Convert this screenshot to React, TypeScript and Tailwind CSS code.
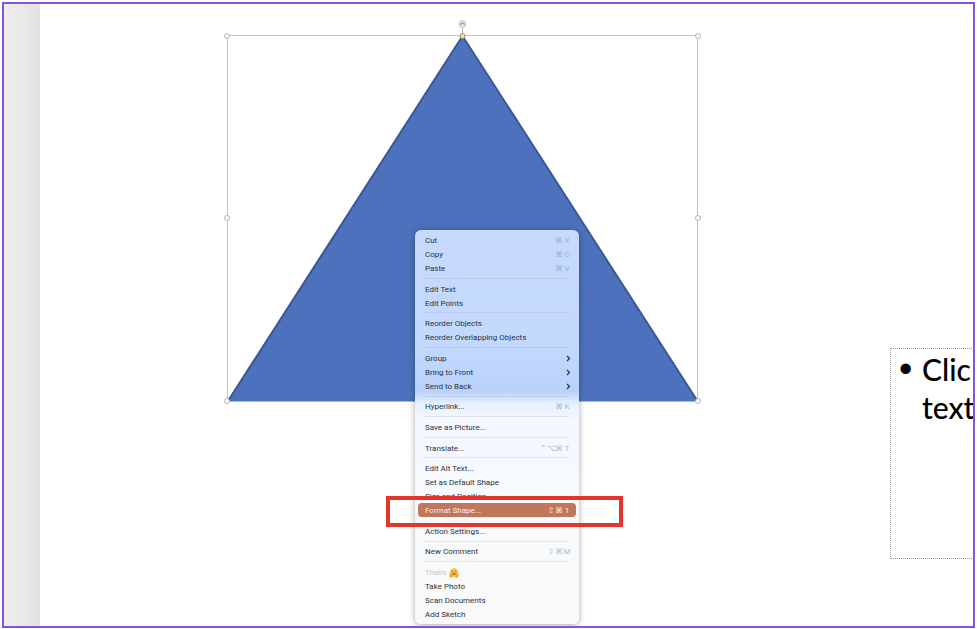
import React from 'react';

interface MenuItem {
  label: string;
  shortcut?: string[];
  submenu?: boolean;
  active?: boolean;
  disabled?: boolean;
}

const MENU: MenuItem[][] = [
  [
    { label: 'Cut', shortcut: ['⌘', 'X'] },
    { label: 'Copy', shortcut: ['⌘', 'C'] },
    { label: 'Paste', shortcut: ['⌘', 'V'] },
  ],
  [{ label: 'Edit Text' }, { label: 'Edit Points' }],
  [{ label: 'Reorder Objects' }, { label: 'Reorder Overlapping Objects' }],
  [
    { label: 'Group', submenu: true },
    { label: 'Bring to Front', submenu: true },
    { label: 'Send to Back', submenu: true },
  ],
  [{ label: 'Hyperlink...', shortcut: ['⌘', 'K'] }],
  [{ label: 'Save as Picture...' }],
  [{ label: 'Translate...', shortcut: ['⌃', '⌥', '⌘', 'T'] }],
  [
    { label: 'Edit Alt Text...' },
    { label: 'Set as Default Shape' },
    { label: 'Size and Position' },
    { label: 'Format Shape...', shortcut: ['⇧', '⌘', '1'], active: true },
  ],
  [{ label: 'Action Settings...' }],
  [{ label: 'New Comment', shortcut: ['⇧', '⌘', 'M'] }],
  [
    { label: 'Thaiis', disabled: true },
    { label: 'Take Photo' },
    { label: 'Scan Documents' },
    { label: 'Add Sketch' },
  ],
];

const HugFace: React.FC = () => (
  <svg viewBox="0 0 20 20" className="ml-0.5 size-[10px]" aria-hidden="true">
    <circle cx="10" cy="9" r="8.5" fill="#f7bd45" />
    <path d="M5.5 7.5q1.5-2 3 0M11.5 7.5q1.5-2 3 0" stroke="#7a4a12" strokeWidth="1.3" fill="none" />
    <path d="M6 10.5h8q-1 3-4 3t-4-3z" fill="#9a5a22" />
    <path d="M1 12q4-1 6 3t-2 4.5Q0 19 1 12zM19 12q-4-1-6 3t2 4.5Q20 19 19 12z" fill="#eda338" />
  </svg>
);

const Chevron: React.FC = () => (
  <svg viewBox="0 0 6 8" className="h-2 w-1.5" aria-hidden="true">
    <path d="M2 1L4.5 3.5L2 6" fill="none" stroke="#243a63" strokeWidth="1.3" />
  </svg>
);

const MenuRow: React.FC<{ item: MenuItem }> = ({ item }) => {
  const tone = item.active
    ? 'bg-[#bf785b] text-[#fdeee6]'
    : item.disabled
      ? 'text-[#c6c6ca]'
      : 'text-[#2a3344]';
  const keyTone = item.active ? 'text-[#fdeee6]' : 'text-[#8d9bb5]/70';

  return (
    <button
      type="button"
      role="menuitem"
      disabled={item.disabled}
      className={`flex h-[14px] shrink-0 items-center rounded-[4px] pt-0.5 pr-[5px] pl-[7px] text-left text-[8px] leading-[14px] whitespace-nowrap ${tone}`}
    >
      <span>{item.label}</span>
      {item.disabled && <HugFace />}
      {item.shortcut && (
        <span className={`ml-auto flex ${keyTone}`}>
          {item.shortcut.map((key) => (
            <span key={key} className="w-2 text-center">{key}</span>
          ))}
        </span>
      )}
      {item.submenu && <span className="ml-auto"><Chevron /></span>}
    </button>
  );
};

const ContextMenu: React.FC = () => (
  <div
    role="menu"
    className="absolute top-[226px] left-[375px] flex h-[394px] w-[164px] flex-col rounded-[6px] bg-[linear-gradient(to_bottom,#c6dafc_0%,#c2d8fd_30%,#b9d1fb_41%,#e6f0fe_44%,#f3f8ff_48%,#f6f9fe_65%,#f9f9f9_85%)] p-[3px] font-['Roboto','DejaVu_Sans',sans-serif] shadow-[0_1px_6px_rgba(0,0,0,0.35)]"
  >
    {MENU.map((group, i) => (
      <React.Fragment key={group[0].label}>
        {i > 0 && (
          <div role="separator" className="mx-[7px] flex flex-1 items-center">
            {!MENU[i - 1].some((item) => item.active) && (
              <div className="h-px w-full bg-[#7d93bb]/20" />
            )}
          </div>
        )}
        {group.map((item) => (
          <MenuRow key={item.label} item={item} />
        ))}
      </React.Fragment>
    ))}
  </div>
);

const HANDLES = [
  [5, 18], [476, 18], [5, 200], [476, 200], [5, 383], [476, 383],
];

// Triangle with its selection frame and handles
const SelectedTriangle: React.FC = () => (
  <svg viewBox="0 0 482 390" className="absolute top-[14px] left-[182px] h-[390px] w-[482px]" role="img" aria-label="Triangle">
    <rect x="5.5" y="17.5" width="470" height="365" fill="none" stroke="#c2c2c2" />
    <path d="M240.5 17L476 383.5H5z" fill="#4e71be" />
    <path d="M6 383L240.5 18L475.5 383" fill="none" stroke="#3a5899" strokeWidth="2" />
    <path d="M240.5 8v9" stroke="#b5b5b5" />
    {HANDLES.map(([x, y]) => (
      <circle key={`${x}-${y}`} cx={x} cy={y} r="2.5" fill="#fff" stroke="#b4b4b4" />
    ))}
    <circle cx="240.5" cy="18" r="2.5" fill="#f7e3a4" stroke="#a58d55" />
    <circle cx="240.5" cy="6" r="3.5" fill="#e2e2e2" stroke="#cfcfcf" />
    <path d="M238.5 7a2 2 0 1 1 4 0" fill="none" stroke="#8c8c8c" />
  </svg>
);

export default function App() {
  return (
    <div className="h-screen bg-white p-[2px] pb-px">
      <div className="flex h-full overflow-hidden border-2 border-[#7f56dd]">
        <aside className="w-9 shrink-0 bg-linear-to-r from-[#eeecee] via-[#e9e9e9] to-[#e2e2e2]" />
        <main className="relative flex-1 overflow-hidden bg-white">
          <SelectedTriangle />
          <div className="absolute top-[344px] left-[850px] h-[211px] w-[200px] border border-dotted border-[#999] pt-px pl-2 font-['Lato',sans-serif] text-[30px] leading-[38px] font-medium text-black">
            <ul>
              <li className="flex">
                <span className="w-[23px] shrink-0 font-['Liberation_Sans',sans-serif] text-[38px]">•</span>
                <span>Clic<br />text</span>
              </li>
            </ul>
          </div>
          <ContextMenu />
          <div className="pointer-events-none absolute top-[492px] left-[346px] h-[31px] w-[237px] border-4 border-[#e5352a]" />
        </main>
      </div>
    </div>
  );
}
